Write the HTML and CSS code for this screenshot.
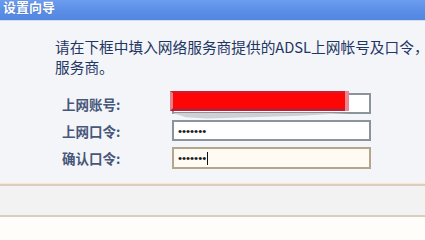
FILE: index.html
```html
<!DOCTYPE html>
<html lang="zh-CN">
<head>
<meta charset="utf-8">
<title>设置向导</title>
<link rel="stylesheet" href="styles.css">
</head>
<body>
<div class="page">
  <div class="titlebar"><span class="title">设置向导</span></div>
  <div class="content">
    <p class="intro">
      <span class="line">请在下框中填入网络服务商提供的ADSL上网帐号及口令，如遗忘请咨询网络</span>
      <span class="line">服务商。</span>
    </p>
    <div class="form">
      <div class="row">
        <span class="label">上网账号:</span>
        <div class="field">
          <div class="input"></div>
          <div class="redact"></div>
          <div class="smear"></div>
        </div>
      </div>
      <div class="row">
        <span class="label">上网口令:</span>
        <div class="field">
          <div class="input"><span class="dots">•••••••</span></div>
        </div>
      </div>
      <div class="row">
        <span class="label">确认口令:</span>
        <div class="field">
          <div class="input focus"><span class="dots">•••••••</span><span class="caret"></span></div>
        </div>
      </div>
    </div>
  </div>
  <div class="band"></div>
  <div class="rest"></div>
</div>
</body>
</html>
```
FILE: styles.css
```css
html, body {
  margin: 0;
  padding: 0;
}
body {
  width: 425px;
  height: 235px;
  overflow: hidden;
  background: #fffdf9;
  font-family: "Noto Sans CJK SC", "Noto Sans", sans-serif;
}
.page {
  width: 425px;
  height: 235px;
  overflow: hidden;
  display: flex;
  flex-direction: column;
}
.titlebar {
  height: 20px;
  overflow: hidden;
  background: linear-gradient(to bottom, #6b9cef 0%, #5a8de6 60%, #5386df 100%);
  border-bottom: 1px solid #d3def0;
  padding-left: 3px;
}
.title {
  display: block;
  margin-top: -1px;
  font-size: 13px;
  line-height: 15px;
  font-weight: bold;
  color: #ffffff;
  text-shadow: 0 0 1px rgba(40, 70, 140, 0.6);
}
.content {
  background: #f4f5f8;
  padding: 16px 0 0 0;
  height: 147px;
}
.intro {
  margin: 0;
  padding-left: 55px;
  font-size: 14.7px;
  line-height: 20px;
  color: #1f3764;
}
.line {
  display: block;
  white-space: nowrap;
}
.form {
  margin-top: 16px;
  display: flex;
  flex-direction: column;
  gap: 6px;
}
.row {
  display: flex;
  align-items: center;
  padding-left: 62px;
  height: 21px;
}
.row:last-child {
  height: 22px;
}
.label {
  width: 110px;
  font-size: 13.5px;
  line-height: 16px;
  color: #46577a;
  font-weight: bold;
  white-space: nowrap;
}
.field {
  position: relative;
  width: 199px;
  height: 100%;
}
.input {
  box-sizing: border-box;
  width: 199px;
  height: 100%;
  border: 2px solid #8b949d;
  background: #ffffff;
  display: flex;
  align-items: center;
  padding-left: 4px;
}
.input.focus {
  border-color: #b4a68d;
  background: #fffbf3;
}
.dots {
  font-family: "Liberation Sans", sans-serif;
  font-size: 11.5px;
  line-height: 12px;
  color: #1c1c1c;
}
.caret {
  display: inline-block;
  width: 0;
  height: 13px;
  border-left: 1px solid #111;
  margin-left: 1px;
}
.redact {
  position: absolute;
  left: -2px;
  top: -2px;
  width: 172px;
  height: 15px;
  background: #fe0606;
  border-top: 2px solid #d21a30;
  border-bottom: 3px solid #c6182e;
  border-left: 3px solid #e2808b;
  box-shadow: 4px 0 0 #e98893;
}
.smear {
  position: absolute;
  left: 0;
  top: 20px;
  width: 178px;
  height: 7px;
  background: #cfd0d3;
  clip-path: polygon(0 0, 100% 0, 72% 40%, 20% 80%, 8% 60%);
}
.band {
  box-sizing: border-box;
  height: 33px;
  border-top: 2px solid #d9cebf;
  border-bottom: 2px solid #d9cebf;
  box-shadow: 0 -1px 0 #fbe7cf;
  background: #f2f2f3;
}
.rest {
  flex: 1;
  background: #fffdf9;
}
```
